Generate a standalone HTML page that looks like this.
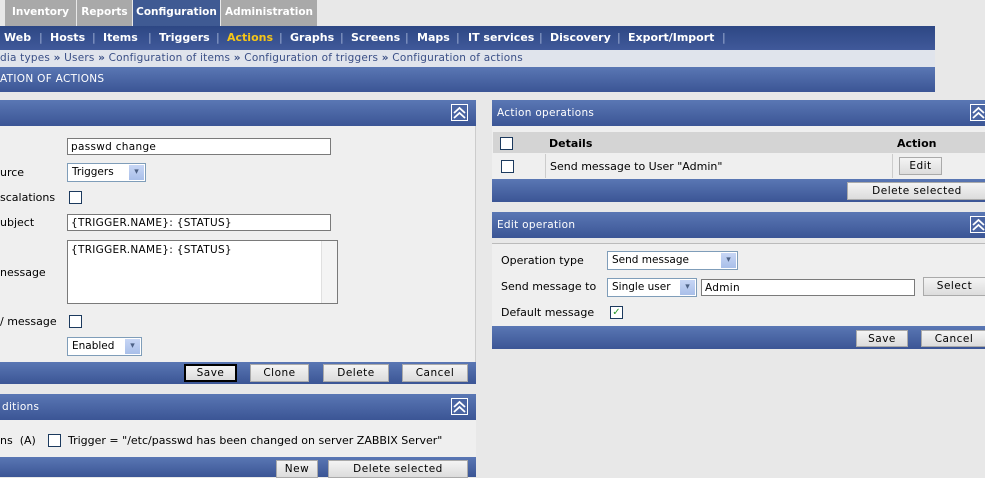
<!DOCTYPE html>
<html><head><style>
*{box-sizing:border-box;margin:0;padding:0}
body{width:985px;height:477px;overflow:hidden;background:#e8e8e8;font-family:"DejaVu Sans","Liberation Sans",sans-serif;font-size:11px;color:#000;position:relative}
.a{position:absolute}
.bar{background:linear-gradient(#5a77b4,#3b5595);}
.tab{position:absolute;top:0;height:26px;color:#fff;font-weight:bold;font-size:10.5px;line-height:25px;text-align:center;background:#a9a9a9}
.nav{position:absolute;top:26px;left:0;width:935px;height:24px;background:linear-gradient(#2d4784,#40599a);color:#fff;font-weight:bold;font-size:11px;line-height:24px;white-space:nowrap}
.nav span{position:absolute}
.sep{color:#9fb0d5;font-weight:normal}
.inp{position:absolute;background:#fff;border:1px solid #7a7a7a;font-size:10.5px;padding-left:3px;line-height:16px;letter-spacing:.3px}
.sel{position:absolute;background:#fff;border:1px solid #7f9db9;font-size:10.5px;padding-left:4px;line-height:17px}
.sel i{position:absolute;right:1px;top:1px;bottom:1px;width:15px;background:linear-gradient(#c7d6f5,#a9bfe9);font-style:normal;color:#4d6185;font-size:9px;text-align:center;line-height:15px}
.cb{position:absolute;width:13px;height:13px;border:1px solid #1c3a5e;background:#fff}
.btn{position:absolute;background:linear-gradient(#f4f4f4,#dcdcdc);border:1px solid #aaa;font-size:10.5px;text-align:center;line-height:17px;letter-spacing:.5px}
.hd{color:#fff;font-size:10.5px;line-height:26px;padding-left:5px;letter-spacing:.3px}
.col{position:absolute;width:17px;height:17px;border:1px solid #fff;background:#4a65a3}
.lbl{position:absolute;font-size:11px;white-space:nowrap}
</style></head><body>
<svg width="0" height="0" style="position:absolute"><symbol id="ch" viewBox="0 0 15 15"><path d="M2 8 L7.5 3 L13 8 M2 13 L7.5 8 L13 13" stroke="#fff" stroke-width="1.8" fill="none"/></symbol></svg>
<div class="tab" style="left:5px;width:71px">Inventory</div>
<div class="tab" style="left:77px;width:55px">Reports</div>
<div class="tab" style="left:133px;width:87px;background:#3f5a93">Configuration</div>
<div class="tab" style="left:221px;width:96px">Administration</div>
<div class="nav">
<span style="left:4px">Web</span><span class="sep" style="left:39px">|</span>
<span style="left:50px">Hosts</span><span class="sep" style="left:92px">|</span>
<span style="left:103px">Items</span><span class="sep" style="left:148px">|</span>
<span style="left:159px">Triggers</span><span class="sep" style="left:216px">|</span>
<span style="left:227px;color:#f5c518">Actions</span><span class="sep" style="left:279px">|</span>
<span style="left:290px">Graphs</span><span class="sep" style="left:340px">|</span>
<span style="left:351px">Screens</span><span class="sep" style="left:405px">|</span>
<span style="left:417px">Maps</span><span class="sep" style="left:456px">|</span>
<span style="left:468px">IT services</span><span class="sep" style="left:539px">|</span>
<span style="left:550px">Discovery</span><span class="sep" style="left:617px">|</span>
<span style="left:628px">Export/Import</span><span class="sep" style="left:722px">|</span>
</div>
<div class="a" style="top:50px;left:0;width:935px;height:17px;background:#e0e4ec;color:#3a4f86;font-size:10.5px;line-height:17px;white-space:nowrap;letter-spacing:.2px">dia types <b>»</b> Users <b>»</b> Configuration of items <b>»</b> Configuration of triggers <b>»</b> Configuration of actions</div>
<div class="a bar hd" style="top:67px;left:0;width:935px;height:25px;padding-left:0;line-height:25px">ATION OF ACTIONS</div>

<div class="a bar" style="top:100px;left:0;width:476px;height:26px"></div>
<svg class="col" style="left:451px;top:104px"><use href="#ch"/></svg>
<div class="a" style="top:126px;left:0;width:476px;height:236px;background:#efefef;border-right:1px solid #ccc"></div>
<div class="inp" style="left:67px;top:138px;width:264px;height:17px">passwd change</div>
<div class="lbl" style="left:0;top:166px">urce</div>
<div class="sel" style="left:67px;top:163px;width:79px;height:19px">Triggers<i>▾</i></div>
<div class="lbl" style="left:0;top:191px">scalations</div>
<div class="cb" style="left:69px;top:191px"></div>
<div class="lbl" style="left:0;top:216px">ubject</div>
<div class="inp" style="left:67px;top:214px;width:264px;height:17px">{TRIGGER.NAME}: {STATUS}</div>
<div class="inp" style="left:67px;top:240px;width:271px;height:64px;padding-top:1px">{TRIGGER.NAME}: {STATUS}</div>
<div class="a" style="left:321px;top:241px;width:16px;height:62px;background:#f4f4f4;border-left:1px solid #e0e0e0"></div>
<div class="lbl" style="left:0;top:266px">nessage</div>
<div class="lbl" style="left:0;top:315px">/ message</div>
<div class="cb" style="left:69px;top:315px"></div>
<div class="sel" style="left:67px;top:337px;width:75px;height:19px">Enabled<i>▾</i></div>
<div class="a bar" style="top:362px;left:0;width:476px;height:22px"></div>
<div class="btn" style="left:184px;top:364px;width:53px;height:18px;border:2px solid #000;line-height:15px">Save</div>
<div class="btn" style="left:250px;top:364px;width:59px;height:18px">Clone</div>
<div class="btn" style="left:323px;top:364px;width:66px;height:18px">Delete</div>
<div class="btn" style="left:402px;top:364px;width:66px;height:18px">Cancel</div>

<div class="a bar hd" style="top:394px;left:0;width:476px;height:26px;padding-left:2px">ditions</div>
<svg class="col" style="left:451px;top:398px"><use href="#ch"/></svg>
<div class="a" style="top:420px;left:0;width:476px;height:37px;background:#efefef"></div>
<div class="lbl" style="left:0;top:434px">ns &nbsp;(A)</div>
<div class="cb" style="left:48px;top:434px"></div>
<div class="lbl" style="left:68px;top:434px">Trigger = "/etc/passwd has been changed on server ZABBIX Server"</div>
<div class="a bar" style="top:457px;left:0;width:476px;height:20px"></div>
<div class="btn" style="left:276px;top:460px;width:42px;height:18px">New</div>
<div class="btn" style="left:328px;top:460px;width:140px;height:18px">Delete selected</div>

<div class="a bar hd" style="top:100px;left:492px;width:493px;height:26px">Action operations</div>
<svg class="col" style="left:970px;top:104px"><use href="#ch"/></svg>
<div class="a" style="top:126px;left:492px;width:493px;height:53px;background:#efefef"></div>
<div class="a" style="top:132px;left:493px;width:492px;height:21px;background:#d4d4d4"></div>
<div class="cb" style="left:500px;top:137px"></div>
<div class="lbl" style="left:549px;top:137px;font-weight:bold">Details</div>
<div class="lbl" style="left:897px;top:137px;font-weight:bold">Action</div>
<div class="a" style="top:154px;left:493px;width:492px;height:24px;background:#efefef"></div>
<div class="a" style="top:154px;left:545px;width:1px;height:24px;background:#ccc"></div>
<div class="a" style="top:154px;left:892px;width:1px;height:24px;background:#ccc"></div>
<div class="cb" style="left:501px;top:160px"></div>
<div class="lbl" style="left:550px;top:160px">Send message to User "Admin"</div>
<div class="btn" style="left:899px;top:157px;width:43px;height:18px">Edit</div>
<div class="a bar" style="top:179px;left:492px;width:493px;height:23px"></div>
<div class="btn" style="left:847px;top:182px;width:140px;height:18px">Delete selected</div>

<div class="a bar hd" style="top:212px;left:492px;width:493px;height:26px">Edit operation</div>
<svg class="col" style="left:970px;top:216px"><use href="#ch"/></svg>
<div class="a" style="top:243px;left:492px;width:493px;height:83px;background:#efefef;border-top:1px solid #bbb"></div>
<div class="lbl" style="left:501px;top:254px">Operation type</div>
<div class="sel" style="left:607px;top:251px;width:131px;height:19px">Send message<i>▾</i></div>
<div class="lbl" style="left:501px;top:280px">Send message to</div>
<div class="sel" style="left:607px;top:278px;width:90px;height:19px">Single user<i>▾</i></div>
<div class="inp" style="left:701px;top:279px;width:214px;height:17px">Admin</div>
<div class="btn" style="left:923px;top:277px;width:63px;height:19px">Select</div>
<div class="lbl" style="left:501px;top:306px">Default message</div>
<div class="cb" style="left:610px;top:306px;color:#2a9a2a;font-size:10px;line-height:11px;text-align:center">✓</div>
<div class="a bar" style="top:326px;left:492px;width:493px;height:23px"></div>
<div class="btn" style="left:856px;top:330px;width:52px;height:17px">Save</div>
<div class="btn" style="left:921px;top:330px;width:66px;height:17px">Cancel</div>
</body></html>
